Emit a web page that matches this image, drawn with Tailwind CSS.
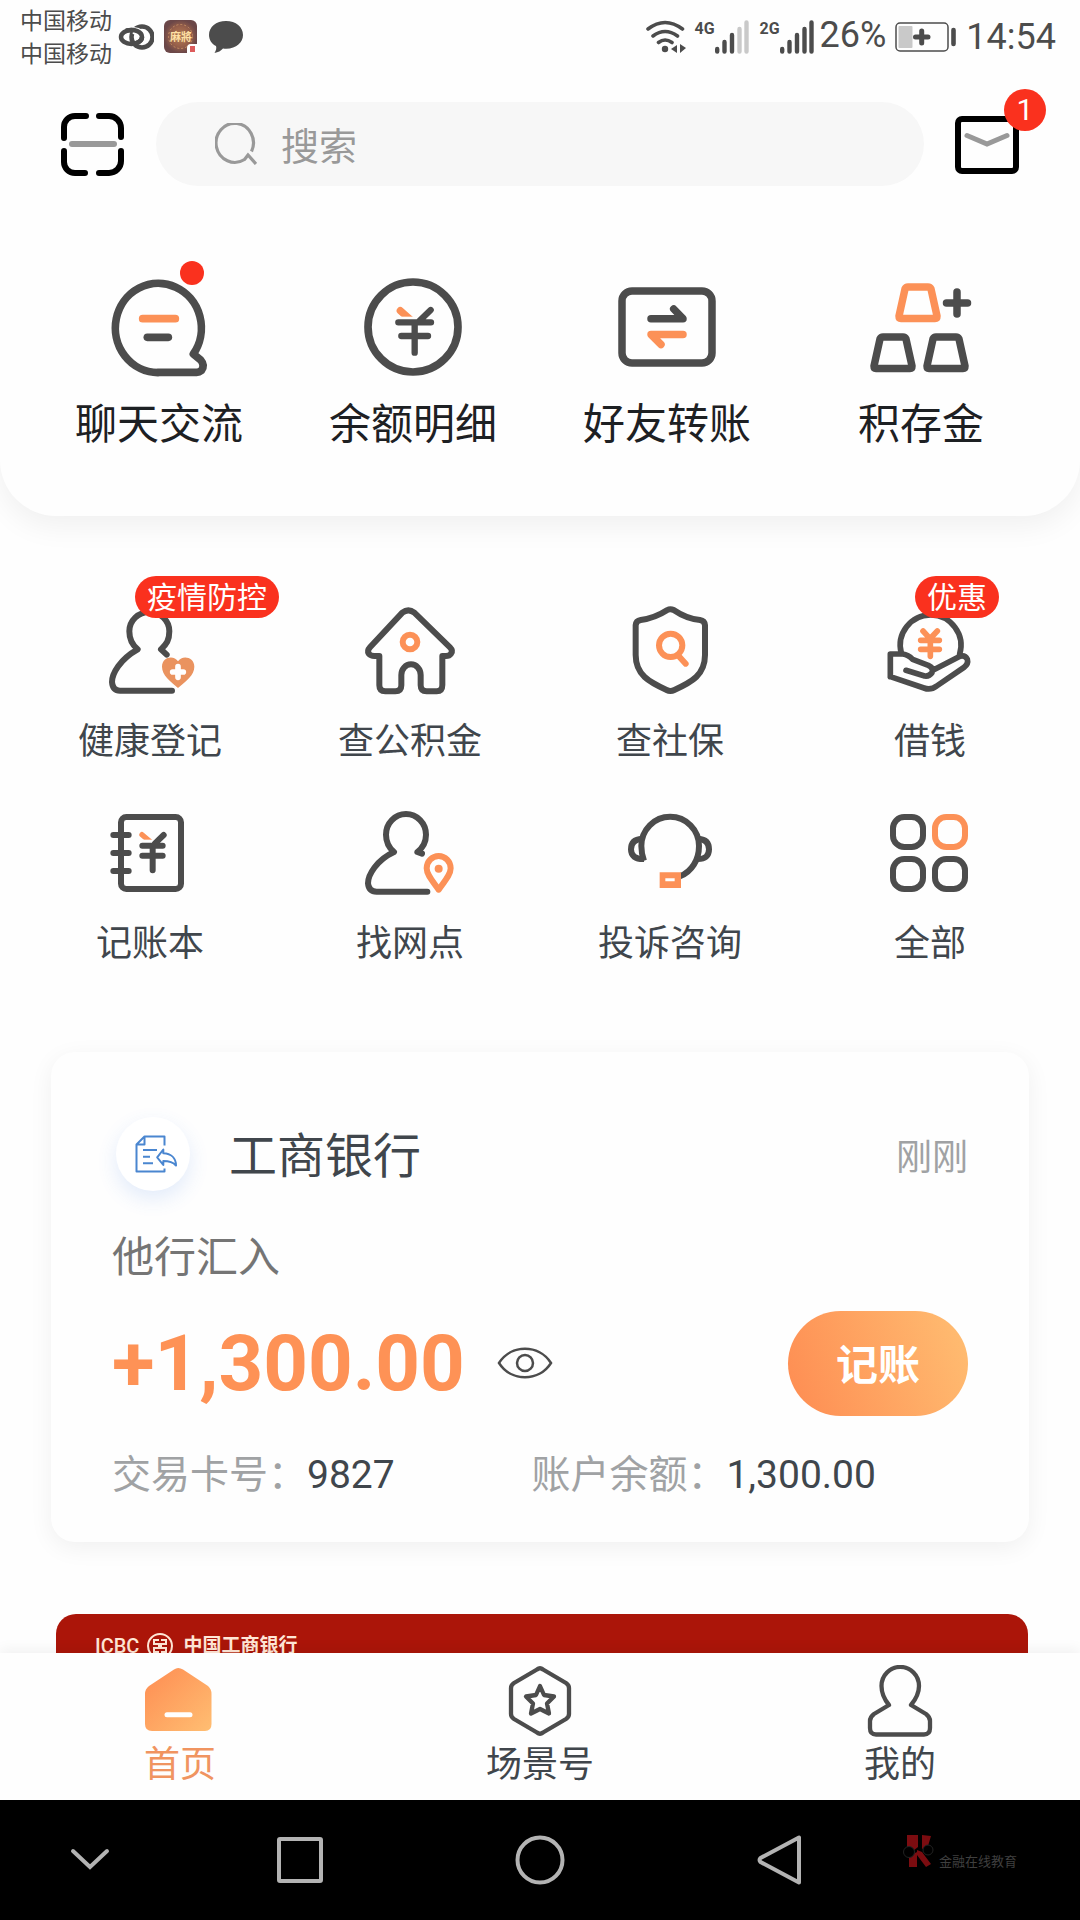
<!DOCTYPE html>
<html lang="zh-CN">
<head>
<meta charset="utf-8">
<meta name="viewport" content="width=device-width, initial-scale=1">
<title>首页</title>
<script src="https://cdn.jsdelivr.net/npm/@tailwindcss/browser@4"></script>
</head>
<body class="flex h-screen flex-col overflow-hidden bg-[#fefefe] font-['Roboto','Noto_Sans_CJK_SC',sans-serif] text-[#40464c]">

<div class="min-h-0 flex-1 overflow-y-auto [scrollbar-width:none]">
  <header class="rounded-b-[56px] bg-[#fefefe] pb-[67px] shadow-[0_10px_30px_rgba(0,0,0,0.06)]">
    <!-- Status bar -->
    <div class="flex h-[74px] items-center justify-between pr-6 pl-5 text-[#4c4c4c]">
      <div class="flex items-center">
        <div class="pt-[2px] text-[23px] leading-[33px]"><div>中国移动</div><div>中国移动</div></div>
        <svg class="ml-[6px] h-[34px] w-9" viewBox="118 20 36 34" fill="none" stroke="#4c4c4c" stroke-width="4.500"><ellipse cx="131.500" cy="37" rx="10.500" ry="7"/><circle cx="142" cy="37" r="10.500"/><path d="M133 30.500C138 31 142 33 142 37" stroke="#fefefe" stroke-width="7"/><path d="M126 30.800C135 28.500 142 32 142 37C142 40 139 42.500 135 43.600"/></svg>
        <svg class="ml-[10px] h-[34px] w-[34px]" viewBox="0 0 34 34"><defs><radialGradient id="tile"><stop offset="0" stop-color="#b27b54"/><stop offset=".6" stop-color="#98604a"/><stop offset="1" stop-color="#6b4748"/></radialGradient></defs><rect width="33" height="33" rx="6" fill="url(#tile)"/><circle cx="16.500" cy="16.500" r="12" fill="none" stroke="#c78f63" stroke-dasharray="2 2"/><text x="6" y="21" font-size="11" font-weight="700" fill="#ffe0a3">麻將</text><path d="M23 34V28Q23 24 27 24H34V34Z" fill="#fff"/><rect x="26" y="26" width="5" height="6" fill="#dd5c5c"/></svg>
        <svg class="ml-[11px] h-[34px] w-[34px]" viewBox="0 0 34 34" fill="#4c4c4c"><path d="M17 1C7 1 0 7 0 15C0 20 3 24 7 26Q8 29 5.500 33Q11 32 14 28.500C26 30 34 23 34 15C34 7 27 1 17 1Z"/></svg>
      </div>
      <div class="flex items-center">
        <svg class="h-[34px] w-10" viewBox="649 19 40 34" fill="none" stroke="#4c4c4c" stroke-width="3.600" stroke-linecap="round"><path d="M651 28Q668 15 685.500 28M656 35Q668 26 680.500 35M661.500 41.500Q668 36.500 675 41.500"/><circle cx="668" cy="48" r="3.200" fill="#4c4c4c" stroke="none"/><path d="M680 44V52L674 48ZM683 43L689 47L683 52Z" fill="#4c4c4c" stroke="none"/></svg>
        <span class="mb-4 ml-[9px] w-5 text-base leading-5 font-bold">4G</span>
        <svg class="h-[34px] w-[34px]" viewBox="0 0 34 34" stroke="#4c4c4c" stroke-width="4.400" stroke-linecap="round"><path d="M2.200 29V31.500M9.500 22V31.500M17 15V31.500"/><path d="M24.500 9V31.500M31.500 2.500V31.500" stroke="#c9c9c9"/></svg>
        <span class="mb-4 ml-[11px] w-5 text-base leading-5 font-bold">2G</span>
        <svg class="h-[34px] w-[34px]" viewBox="0 0 34 34" stroke="#4c4c4c" stroke-width="4.400" stroke-linecap="round"><path d="M2.200 29V31.500M9.500 22V31.500M17 15V31.500M24.500 9V31.500M31.500 2.500V31.500"/></svg>
        <span class="mb-1 ml-[6px] text-4xl leading-10">26%</span>
        <svg class="ml-[9px] h-[30px] w-[62px]" viewBox="0 0 62 30" fill="none"><rect x="1" y="1" width="52" height="28" rx="4" stroke="#4c4c4c" stroke-width="1.500"/><rect x="3.500" y="4" width="14" height="22" rx="1" fill="#c9c9c9"/><path d="M20.500 15H33M26.700 9V21" stroke="#4c4c4c" stroke-width="5" stroke-linecap="round"/><path d="M58.500 8V22" stroke="#4c4c4c" stroke-width="4.600" stroke-linecap="round"/></svg>
        <span class="ml-[9px] text-4xl leading-10">14:54</span>
      </div>
    </div>

    <!-- Search row -->
    <div class="mt-7 flex items-center px-[61px]">
      <button type="button" aria-label="扫一扫" class="shrink-0">
        <svg class="h-[63px] w-[63px]" viewBox="0 0 63 63" fill="none" stroke="#000" stroke-width="6" stroke-linecap="round"><path d="M3 25V14A11 11 0 0 1 14 3H25M38 3H48A12 12 0 0 1 60 15V24M60 38V48A12 12 0 0 1 48 60H38M24 60H14A11 11 0 0 1 3 49V38"/><path d="M11 31H53" stroke="#999"/></svg>
      </button>
      <label class="mr-[31px] ml-8 flex h-[84px] min-w-0 flex-1 items-center gap-6 rounded-full bg-[#f7f7f7] pr-8 pl-[59px]">
        <svg class="h-[42px] w-[42px] shrink-0" viewBox="216 123 42 42" fill="none" stroke="#999" stroke-width="3.200"><path d="M252.500 151.500A18.700 19.500 0 1 0 245.500 159.500L249 155L257 164"/></svg>
        <input type="search" placeholder="搜索" aria-label="搜索" class="min-w-0 flex-1 bg-transparent pt-[5px] text-[38px] leading-12 outline-none placeholder:text-[#999]">
      </label>
      <button type="button" aria-label="消息" class="relative shrink-0 pt-[2px]">
        <svg class="h-[58px] w-16" viewBox="955 117 64 58" fill="none" stroke-width="6"><rect x="958" y="120" width="58" height="52" rx="4" stroke="#000"/><path d="M967 136.500L987 145L1007 136.500" stroke="#999" stroke-width="5" stroke-linecap="round"/></svg>
        <span class="absolute -top-[25px] left-[49px] flex h-[42px] w-[42px] items-center justify-center rounded-full bg-[#fa311e] text-[30px] leading-10 text-white">1</span>
      </button>
    </div>

    <!-- Quick actions -->
    <nav class="mt-[86px] grid grid-cols-4 px-8 text-center text-[42px] leading-12 text-[#1d2023]">
      <a href="#chat" class="flex flex-col items-center gap-[17px]">
        <span class="relative">
          <svg class="h-28 w-28" viewBox="189 96 336 336" fill="none" stroke="#4c4c4c" stroke-width="23" stroke-linecap="round" stroke-linejoin="round"><path d="M354 398A129 134 0 1 1 460 342L482 360Q496 376 484 392Q478 397 470 397H354Z"/><path d="M308 236H406" stroke="#fc9157"/><path d="M322 292H385"/></svg>
          <span class="absolute -top-[11px] right-[11px] h-6 w-6 rounded-full bg-[#fa311e]"></span>
        </span>
        聊天交流
      </a>
      <a href="#balance" class="flex flex-col items-center gap-[17px]">
        <svg class="h-28 w-28" viewBox="951 96 336 336" fill="none" stroke="#4c4c4c" stroke-width="19" stroke-linecap="round"><circle cx="1119" cy="261" r="135" stroke-width="23"/><path d="M1081 212L1115 242" stroke="#fc9157" stroke-width="22"/><path d="M1062 230H1132V256H1062Z" fill="#fefefe" stroke="none"/><path d="M1172 210L1138 243M1075 247H1173M1084 288H1164M1124 250V338"/></svg>
        余额明细
      </a>
      <a href="#transfer" class="flex flex-col items-center gap-[17px]">
        <svg class="h-28 w-28" viewBox="611 272 112 112" fill="none" stroke="#4c4c4c" stroke-width="7.500" stroke-linecap="round" stroke-linejoin="round"><rect x="622" y="291" width="90" height="72" rx="10"/><path d="M651 318.700H683L673.700 309"/><path d="M683 334.500H651L661 344.500" stroke="#fc9157"/></svg>
        好友转账
      </a>
      <a href="#gold" class="flex flex-col items-center gap-[17px]">
        <svg class="h-28 w-28" viewBox="865 272 112 112" fill="none" stroke="#4c4c4c" stroke-width="7.500" stroke-linecap="round" stroke-linejoin="round"><path d="M908 287H928Q930 287 931 289L937 316Q937 318.500 935 318.500H901Q899 318.500 899 316L905 289Q906 287 908 287Z" stroke="#fc9157"/><path d="M883 337H903Q905 337 906 339L912 366Q912 368.500 910 368.500H876Q874 368.500 874 366L880 339Q881 337 883 337ZM936 337H956Q958 337 959 339L965 366Q965 368.500 963 368.500H929Q927 368.500 927 366L933 339Q934 337 936 337ZM946.500 303H967.500M957 292V314"/></svg>
        积存金
      </a>
    </nav>
  </header>

  <main>
    <!-- Services -->
    <nav class="mt-[86px] grid grid-cols-4 gap-y-[38px] px-5 text-center text-4xl leading-12">
      <a href="#health" class="flex flex-col items-center gap-5">
        <span class="relative">
          <svg class="h-24 w-24" viewBox="186 126 288 288" fill="none" stroke="#4c4c4c" stroke-width="18" stroke-linecap="round" stroke-linejoin="round"><path d="M380 284L363 268C380 252 388 240 388 214A60 58 0 0 0 268 214C268 240 278 256 293 268C240 298 216 340 216 366Q218 392 240 392H396"/><path d="M414 384C390 364 366 345 366 320C366 290 402 284 414 304C426 284 463 290 463 320C463 345 438 364 414 384Z" fill="#ea935f" stroke="none"/><path d="M398 336H430M414 320V352" stroke="#fff" stroke-width="17"/></svg>
          <span class="absolute -top-[26px] left-[33px] h-[42px] rounded-full bg-[#fa311e] px-3 pt-px text-3xl leading-[42px] whitespace-nowrap text-white">疫情防控</span>
        </span>
        健康登记
      </a>
      <a href="#fund" class="flex flex-col items-center gap-5">
        <svg class="h-24 w-24" viewBox="966 126 288 288" fill="none" stroke="#4c4c4c" stroke-width="18" stroke-linejoin="round"><path d="M1087 158Q1105 144 1123 158L1230 262Q1240 272 1233 281Q1228 288 1218 288H1207V375Q1207 394 1190 394H1160Q1142 394 1142 376V345A29 32 0 0 0 1084 345V376Q1084 394 1066 394H1036Q1018 394 1018 376V288H1003Q992 288 986 281Q981 272 990 262Z"/><circle cx="1110" cy="246" r="22" stroke="#fc9157"/></svg>
        查公积金
      </a>
      <a href="#social" class="flex flex-col items-center gap-5">
        <svg class="h-24 w-24" viewBox="186 126 288 288" fill="none" stroke="#4c4c4c" stroke-width="18" stroke-linecap="round" stroke-linejoin="round"><path d="M322 150Q331 145 341 150C360 163 390 177 420 180Q434 182 435 196V285C435 345 395 366 343 390Q331 396 320 390C268 366 227 345 227 285V196Q228 182 242 180C272 176 302 163 322 150Z"/><path d="M358 290L377 311M367 256A35 35 0 1 1 297 256A35 35 0 1 1 367 256Z" stroke="#fc9157"/></svg>
        查社保
      </a>
      <a href="#loan" class="flex flex-col items-center gap-5">
        <span class="relative">
          <svg class="h-24 w-24" viewBox="966 126 288 288" fill="none" stroke="#4c4c4c" stroke-width="17" stroke-linecap="round" stroke-linejoin="round"><path d="M1024 280A91 91 0 1 1 1199 282"/><path d="M991 350V282H1028Q1045 284 1058 298L1105 316Q1122 324 1116 338Q1108 350 1094 348L1038 331M1120 330L1200 289Q1215 284 1222 298Q1226 312 1212 322L1130 378Q1112 392 1092 384L991 350"/><path d="M1089 213L1110 236L1132 213M1082 241H1138M1082 268H1138M1111 238V289" stroke="#fc9157"/></svg>
          <span class="absolute -top-[26px] left-[33px] h-[42px] rounded-full bg-[#fa311e] px-3 pt-px text-3xl leading-[42px] whitespace-nowrap text-white">优惠</span>
        </span>
        借钱
      </a>
      <a href="#ledger" class="flex flex-col items-center gap-5">
        <svg class="h-24 w-24" viewBox="186 732 288 288" fill="none" stroke="#4c4c4c" stroke-width="18" stroke-linecap="round"><rect x="243" y="771" width="180" height="216" rx="16"/><path d="M220 825H266M220 879H266M220 933H266"/><path d="M306 824L332 846" stroke="#fc9157" stroke-width="16"/><path d="M290 839H342V860H290Z" fill="#fefefe" stroke="none"/><path d="M371 825L345 850M307 857H368M307 887H368M338 857V931"/></svg>
        记账本
      </a>
      <a href="#branch" class="flex flex-col items-center gap-5">
        <svg class="h-24 w-24" viewBox="966 732 288 288" fill="none" stroke="#4c4c4c" stroke-width="18" stroke-linecap="round" stroke-linejoin="round"><path d="M1146 881L1132 876C1150 862 1158 848 1158 824A60 62 0 0 0 1038 824C1038 848 1048 864 1062 876C1010 900 984 945 984 970Q986 995 1010 995H1162"/><path d="M1196 989C1180 966 1160 945 1160 925A36 37 0 0 1 1232 925C1232 945 1212 966 1196 989Z" stroke="#fc9157"/><circle cx="1196" cy="926" r="12" fill="#fc9157" stroke="none"/></svg>
        找网点
      </a>
      <a href="#service" class="flex flex-col items-center gap-5">
        <svg class="h-24 w-24" viewBox="186 732 288 288" fill="none" stroke="#4c4c4c" stroke-width="18"><path d="M252 902Q244 880 244 858A86 87 0 0 1 417 858C417 900 395 935 360 949"/><path d="M246 836Q213 838 213 868Q213 898 252 897M415 836Q447 838 447 868Q447 898 412 897"/><path d="M299 937H363V984H299ZM316 955V964H344V955Z" fill="#fc9157" fill-rule="evenodd" stroke="none"/></svg>
        投诉咨询
      </a>
      <a href="#all" class="flex flex-col items-center gap-5">
        <svg class="h-24 w-24" viewBox="966 732 288 288" fill="none" stroke="#4c4c4c" stroke-width="18"><rect x="999" y="771" width="90" height="90" rx="34"/><rect x="1125" y="771" width="90" height="90" rx="34" stroke="#fc9157"/><rect x="999" y="897" width="90" height="90" rx="34"/><rect x="1125" y="897" width="90" height="90" rx="34"/></svg>
        全部
      </a>
    </nav>

    <!-- Transaction card -->
    <section class="mx-[51px] mt-[84px] rounded-3xl bg-[#fefefe] px-[61px] pt-[65px] pb-11 shadow-[0_6px_24px_rgba(0,0,0,0.06)]">
      <div class="flex items-center">
        <span class="ml-1 h-[74px] w-[74px] shrink-0 rounded-full bg-white shadow-[0_8px_20px_rgba(60,120,230,0.14)]">
          <svg class="h-[74px] w-[74px]" viewBox="116 1117 74 74" fill="none" stroke="#4a86d0" stroke-width="2" stroke-linejoin="round"><path d="M164.500 1145.500V1136.500H144.500L136.500 1144.500V1171.500H164.500V1168.500M144.500 1136.500V1144.500H136.500M143 1150H157M143 1156.700H150M143 1163.300H153M163.300 1149.500L157.200 1157.300L163.300 1165V1161C169 1161 173 1162 176 1165.500C176 1158 171 1153.500 163.300 1153.200Z"/></svg>
        </span>
        <h2 class="ml-[39px] flex-1 pt-[6px] text-5xl leading-12">工商银行</h2>
        <time class="pt-2 text-4xl leading-12 text-[#a0a2a4]">刚刚</time>
      </div>
      <p class="mt-[43px] text-[42px] leading-12 text-[#757575]">他行汇入</p>
      <div class="mt-[29px] flex items-center">
        <strong class="text-[78px] leading-[80px] font-bold text-[#fe9256]">+1,300.00</strong>
        <button type="button" aria-label="隐藏金额" class="ml-8 pb-[2px]">
          <svg class="h-8 w-14" viewBox="498 1346 56 32" fill="none" stroke="#4c4c4c" stroke-width="2.500"><path d="M500 1362C512 1343 540 1343 552 1362C540 1381 512 1381 500 1362Z"/><circle cx="526" cy="1362" r="8"/></svg>
        </button>
        <button type="button" class="ml-auto h-[105px] w-[180px] rounded-full bg-linear-[70deg] from-[#fe8c52] to-[#ffbe72] pt-1 text-[42px] leading-12 font-bold text-white">记账</button>
      </div>
      <dl class="mt-[35px] -mb-px grid grid-cols-[49fr_51fr] text-[39px] leading-12">
        <div class="flex"><dt class="text-[#a0a2a4]">交易卡号：</dt><dd>9827</dd></div>
        <div class="flex"><dt class="text-[#a0a2a4]">账户余额：</dt><dd>1,300.00</dd></div>
      </dl>
    </section>

    <!-- Banner -->
    <a href="#banner" class="mt-[72px] mr-13 ml-14 flex h-60 items-start gap-2 rounded-[20px] bg-[#ab1509] pt-4 pl-[39px] text-[#ffe6d6]">
      <span class="text-xl leading-8 font-medium">ICBC</span>
      <svg class="mt-[3px] h-[26px] w-[26px]" viewBox="0 0 26 26" fill="none" stroke="#ffe6d6" stroke-width="2"><circle cx="13" cy="13" r="12"/><path d="M12 7H7V11H12V15H7V19H12M14 7H19V11H14V15H19V19H14"/></svg>
      <span class="ml-[2px] text-[19px] leading-8 font-bold">中国工商银行</span>
    </a>
  </main>
</div>

<!-- Tab bar -->
<nav class="relative z-10 grid shrink-0 grid-cols-3 bg-[#fefefe] pt-3 pb-[15px] text-center text-4xl leading-10 shadow-[0_-4px_12px_rgba(0,0,0,0.05)]">
  <a href="#home" aria-current="page" class="flex flex-col items-center gap-2 text-[#f09460]">
    <svg class="h-[72px] w-[72px]" viewBox="144 1665 72 72"><defs><linearGradient id="home" x2="1" y2="1"><stop offset="0" stop-color="#fe8c52"/><stop offset="1" stop-color="#ffbe72"/></linearGradient></defs><path d="M174 1669.500Q178 1666.500 183 1669.500L208 1686Q211.500 1689 211.500 1694V1724Q211.500 1731 205 1731H152Q145 1731 145 1724V1694Q145 1689 149 1686Z" fill="url(#home)"/><path d="M167 1714.700H190" stroke="#fff" stroke-width="5" stroke-linecap="round"/></svg>
    首页
  </a>
  <a href="#scene" class="flex flex-col items-center gap-2">
    <svg class="h-[72px] w-[72px]" viewBox="504 1665 72 72" fill="none" stroke="#4c4c4c" stroke-width="4.300" stroke-linejoin="round"><path d="M537 1669.500Q540 1667 543 1669.500L566 1683Q569 1685 569 1688V1714Q569 1717 566 1719L543 1732.500Q540 1735 537 1732.500L514 1719Q511 1717 511 1714V1688Q511 1685 514 1683Z"/><path d="M540 1686L544 1695L554 1696.500L547 1703.500L549 1713.500L540 1709L531 1713.500L533 1703.500L526 1696.500L536 1695Z"/></svg>
    场景号
  </a>
  <a href="#me" class="flex flex-col items-center gap-2">
    <svg class="h-[72px] w-[72px]" viewBox="864 1665 72 72" fill="none" stroke="#4c4c4c" stroke-width="4.300" stroke-linejoin="round"><path d="M889 1705C884 1699 881.500 1692 881.500 1686A18.700 19 0 0 1 919 1686C919 1692 916 1699 911 1705L926 1714Q930 1717 930 1721V1728Q930 1734.500 924 1734.500H876Q870 1734.500 870 1728V1721Q870 1717 874 1714Z"/></svg>
    我的
  </a>
</nav>

<!-- System keys -->
<footer class="relative z-10 grid h-[120px] shrink-0 grid-cols-[3fr_4fr_4fr_4fr_3fr] place-items-center bg-black">
  <button type="button" aria-label="收起"><svg class="h-[50px] w-[50px]" viewBox="0 0 50 50" fill="none" stroke="#b3b3b3" stroke-width="4" stroke-linecap="round"><path d="M8 16L25 32L42 16"/></svg></button>
  <button type="button" aria-label="最近任务"><svg class="h-[50px] w-[50px]" viewBox="0 0 50 50" fill="none" stroke="#b3b3b3" stroke-width="4"><rect x="4" y="4" width="42" height="42" rx="1"/></svg></button>
  <button type="button" aria-label="主屏幕"><svg class="h-[50px] w-[50px]" viewBox="0 0 50 50" fill="none" stroke="#b3b3b3" stroke-width="4"><circle cx="25" cy="25" r="22.500"/></svg></button>
  <button type="button" aria-label="返回"><svg class="h-[50px] w-[50px]" viewBox="0 0 50 50" fill="none" stroke="#b3b3b3" stroke-width="4" stroke-linejoin="round"><path d="M44 2.500V47.500L5.500 27Q3.500 25 5.500 23Z"/></svg></button>
  <div class="mb-[18px] flex items-end gap-1 justify-self-start pl-[3px] text-[13px] leading-3 text-[#3f3f3f]">
    <svg class="h-[34px] w-[32px]" viewBox="0 0 32 34" fill="#7b0c10"><path d="M4 1H15V13L10 17L4 13ZM19 1L28 2L25 12L19 15ZM6 22L14 18V33H6ZM14 16L19 18L28 30L23 33L14 21Z"/><circle cx="6" cy="18" r="5.500" fill="#000" stroke="#222"/><circle cx="25" cy="16" r="5" fill="#000" stroke="#222"/></svg>
    <span>金融在线教育</span>
  </div>
</footer>
</body>
</html>
